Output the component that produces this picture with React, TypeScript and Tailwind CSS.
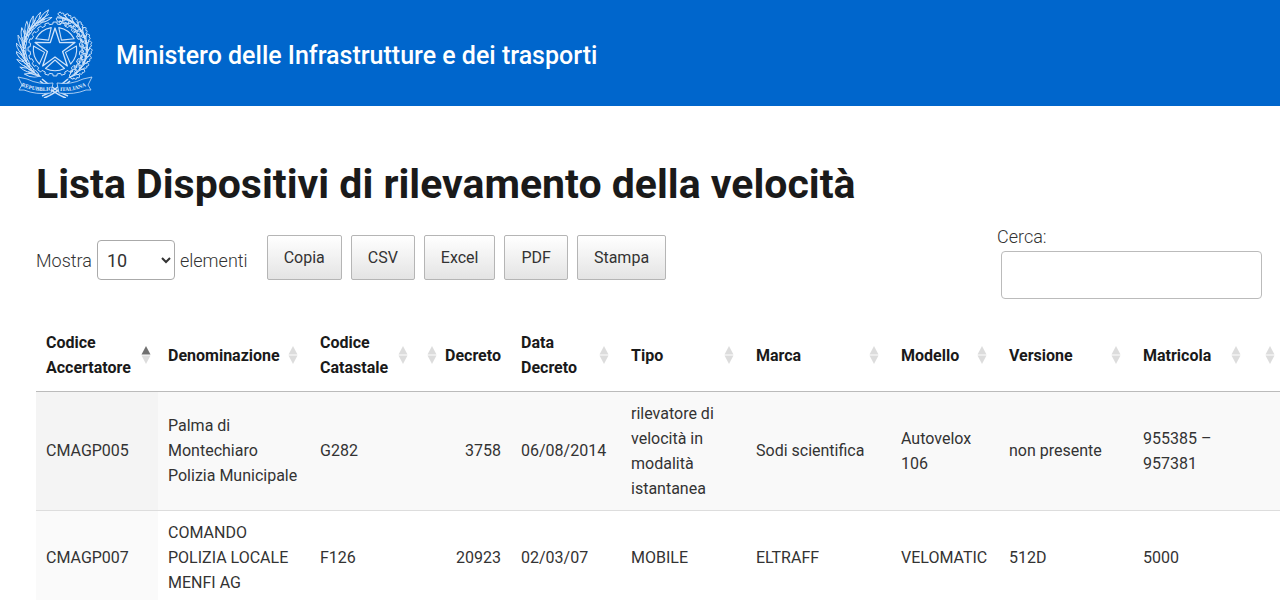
const polar = (deg: number, rx: number, ry = rx) => {
  const a = (deg * Math.PI) / 180;
  return [Math.cos(a) * rx, Math.sin(a) * ry];
};

const OliveBranch = () => (
  <g strokeWidth="0.9">
    {Array.from({ length: 11 }, (_, i) => {
      const deg = 120 + i * 12;
      const [x, y] = polar(deg, 31, 31);
      return (
        <g key={deg} transform={`translate(${x} ${y}) rotate(${deg + 90})`}>
          <path d="M0 0Q4 -6 14 -6Q9 -1 0 0Z" />
          <path d="M0 0Q5 4 13 2Q7 -1 0 0Z" />
          <path d="M-2 0Q5 -2.500 12 -2" />
        </g>
      );
    })}
  </g>
);

const OakBranch = () => (
  <g strokeWidth="0.9">
    {Array.from({ length: 12 }, (_, i) => {
      const deg = 62 - i * 12;
      const [x, y] = polar(deg, 32, 32);
      return (
        <g key={deg} transform={`translate(${x} ${y}) rotate(${deg - 90})`}>
          <path d="M0 0Q0 -3 2 -2.500Q3 -6 5 -4Q7 -7 8 -4Q10 -4 9 -2Q5 -1 0 0Z" />
          <path d="M0 0Q1 4 3 2.500Q4 6 6 3.500Q8 6 9 3Q10 2 8 1Q4 0 0 0Z" />
          <path d="M-2 0Q4 1 9 -1" />
          <circle cx="4" cy="-5" r="1.300" />
        </g>
      );
    })}
  </g>
);

const Emblem = () => {
  const gear = Array.from({ length: 20 }, (_, i) => {
    const d = i * 18 - 90;
    return [
      [d - 5, 25],
      [d - 4, 27],
      [d + 4, 27],
      [d + 5, 25],
    ]
      .map(([deg, r]) => polar(deg, r).join(","))
      .join(" ");
  }).join(" ");
  const star = Array.from({ length: 10 }, (_, i) => polar(i * 36 - 90, i % 2 ? 8 : 21).join(",")).join(" ");
  return (
    <svg viewBox="-39 -41 78 90" className="h-[90px] w-[78px] shrink-0" fill="none" stroke="#cfe3fa" strokeWidth="0.8" strokeLinejoin="round" role="img" aria-label="Emblema della Repubblica">
      <OliveBranch />
      <OakBranch />
      <polygon points={gear} fill="#0066cc" strokeWidth="1" />
      <polygon points={star} strokeWidth="1.300" />
      {[0, 72, 144, 216, 288].map((d) => (
        <path key={d} transform={`rotate(${d})`} d="M0 11L-9.500 19.500A21.700 21.700 0 0 0 9.500 19.500Z" strokeWidth="1.100" />
      ))}
      <path d="M-13 47Q-2 43 13 30M-11 49Q0 45 15 32M13 47Q2 43 -13 30M11 49Q0 45 -15 32" strokeWidth="1.600" />
      <path d="M-37 28L-28 30Q-16 36 -2 34L-4 44Q-19 46 -31 41L-36 41L-33 36Z" fill="#0066cc" />
      <path d="M37 28L28 30Q16 36 2 34L4 44Q19 46 31 41L36 41L33 36Z" fill="#0066cc" />
      <path id="ribbon-left" d="M-34 37Q-18 44 -1 41" stroke="none" />
      <path id="ribbon-right" d="M5 42Q18 43 34 36" stroke="none" />
      <g fill="#e6f1fd" stroke="none" fontSize="5.500" fontWeight="bold" fontFamily="Liberation Serif, serif">
        <text>
          <textPath href="#ribbon-left">REPUBBLICA</textPath>
        </text>
        <text>
          <textPath href="#ribbon-right">ITALIANA</textPath>
        </text>
      </g>
    </svg>
  );
};

const Sort = ({ active = false }: { active?: boolean }) => (
  <svg viewBox="0 0 10 20" className="h-5 w-[10px] shrink-0" aria-hidden="true">
    <path d="M5 1L9.500 9.500H0.500Z" fill={active ? "#707070" : "#dcdcdc"} />
    <path d="M5 19L9.500 10.500H0.500Z" fill="#dcdcdc" />
  </svg>
);

const columns = ["Codice Accertatore", "Denominazione", "Codice Catastale", "Decreto", "Data Decreto", "Tipo", "Marca", "Modello", "Versione", "Matricola", ""];

const rows = [
  ["CMAGP005", "Palma di Montechiaro Polizia Municipale", "G282", "3758", "06/08/2014", "rilevatore di velocità in modalità istantanea", "Sodi scientifica", "Autovelox 106", "non presente", "955385 – 957381", ""],
  ["CMAGP007", "COMANDO POLIZIA LOCALE MENFI AG", "F126", "20923", "02/03/07", "MOBILE", "ELTRAFF", "VELOMATIC", "512D", "5000", ""],
];

const headClass = (i: number) => {
  if (i === 0) return "flex items-center justify-between pl-[10px] pr-[7px]";
  if (columns[i] === "Decreto") return "flex flex-row-reverse items-center justify-between pl-[7px] pr-[10px]";
  if (columns[i] === "") return "flex items-center pl-3";
  return "flex items-center justify-between pl-[10px] pr-3";
};

const cellClass = (j: number) => {
  if (j === 0) return "bg-black/2 px-[10px] py-[9px]";
  if (j === 3) return "px-[10px] py-[9px] text-right";
  return "px-[10px] py-[9px]";
};

export default function App() {
  return (
    <div className="overflow-x-hidden bg-white font-['Roboto',sans-serif] text-[#333]">
      <header className="flex h-[106px] items-center gap-[22px] bg-[#0066cc] px-4">
        <Emblem />
        <p className="pt-1.5 text-[25px] font-medium text-white">Ministero delle Infrastrutture e dei trasporti</p>
      </header>
      <main className="pl-9 pt-[53px]">
        <h1 className="text-[41px] leading-[50px] font-bold text-[#1a1a1a]">Lista Dispositivi di rilevamento della velocità</h1>
        <div className="flex items-start justify-between pr-[18px] pt-4">
          <div className="flex items-end gap-[19px] pt-[10px]">
            <label className="flex h-10 items-center gap-[5px] text-[18px] font-light">
              Mostra
              <select className="h-10 w-[78px] rounded border border-[#aaa] bg-white pl-[5px] text-[18px] font-normal">
                <option>10</option>
              </select>
              elementi
            </label>
            <div className="flex gap-[9px]">
              {["Copia", "CSV", "Excel", "PDF", "Stampa"].map((b) => (
                <button key={b} className="h-[45px] rounded-xs border border-[#b5b5b5] bg-linear-to-b from-white to-[#e4e4e4] px-4 text-[16px]">
                  {b}
                </button>
              ))}
            </div>
          </div>
          <label className="flex flex-col gap-[2px] text-[18px] leading-6 font-light">
            Cerca:
            <input type="search" className="ml-1 h-12 w-[261px] rounded border border-[#bbb] bg-white px-2" />
          </label>
        </div>
        <table className="mt-[21px] w-full table-fixed border-collapse text-[16px] leading-[25px]">
          <colgroup>
            <col className="w-[122px]" />
            <col className="w-[152px]" />
            <col className="w-[110px]" />
            <col className="w-[91px]" />
            <col className="w-[110px]" />
            <col className="w-[125px]" />
            <col className="w-[145px]" />
            <col className="w-[108px]" />
            <col className="w-[134px]" />
            <col className="w-[120px]" />
            <col />
          </colgroup>
          <thead>
            <tr className="h-[71px] border-b border-[#bbb] text-[#1a1a1a]">
              {columns.map((c, i) => (
                <th key={i} scope="col" className="p-0 text-left font-bold">
                  <div className={headClass(i)}>
                    {c}
                    <Sort active={i === 0} />
                  </div>
                </th>
              ))}
            </tr>
          </thead>
          <tbody>
            {rows.map((r, i) => (
              <tr key={i} className="border-b border-[#ddd] odd:bg-[#f9f9f9]">
                {r.map((c, j) => (
                  <td key={j} className={cellClass(j)}>
                    {c}
                  </td>
                ))}
              </tr>
            ))}
          </tbody>
        </table>
      </main>
    </div>
  );
}
